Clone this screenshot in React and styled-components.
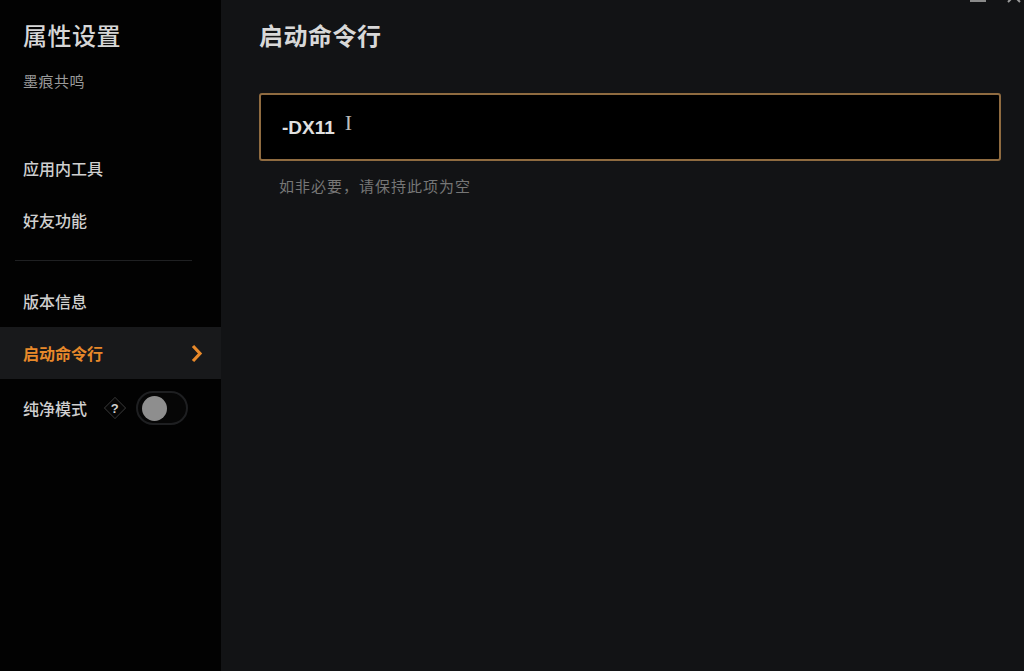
import React from "react";
import styled, { createGlobalStyle } from "styled-components";

const Global = createGlobalStyle`
  html, body { margin: 0; padding: 0; background: #121315; }
  body { font-family: "Noto Sans CJK SC", "Noto Sans", "Liberation Sans", sans-serif; }
  * { box-sizing: border-box; }
`;

const Frame = styled.div`
  position: relative;
  display: flex;
  width: 1024px;
  height: 671px;
  overflow: hidden;
  background: #121315;
`;

const Sidebar = styled.aside`
  width: 221px;
  flex: none;
  background: #020202;
  display: flex;
  flex-direction: column;
  padding-top: 18px;
`;

const SideTitle = styled.h1`
  margin: 0 0 0 23px;
  font-size: 24px;
  font-weight: 500;
  color: #d6d6d6;
  line-height: 34px;
  letter-spacing: 0.5px;
`;

const SideSub = styled.div`
  margin: 19px 0 0 23px;
  font-size: 15px;
  color: #9a9a9a;
  line-height: 20px;
  letter-spacing: 0.5px;
`;

const Spacer = styled.div`
  height: 51px;
`;

const NavItem = styled.div`
  display: flex;
  align-items: center;
  height: ${(p) => p.$h || 52}px;
  padding: 0 18px 0 23px;
  font-size: 16px;
  font-weight: ${(p) => (p.$active ? 700 : 500)};
  color: ${(p) => (p.$active ? "#e8892a" : "#cfcfcf")};
  background: ${(p) => (p.$active ? "#18191b" : "transparent")};
  gap: 6px;
`;

const NavText = styled.span`
  flex: 1;
`;

const Divider = styled.div`
  height: 1px;
  margin: 14px 29px 14px 15px;
  background: #1f2022;
`;

const Help = styled.span`
  width: 16px;
  height: 16px;
  display: inline-flex;
  align-items: center;
  justify-content: center;
  transform: rotate(45deg);
  border: 1.5px solid #2c2c2c;
  background: #050505;
  margin: 0 7px 0 14px;
  & > span {
    transform: rotate(-45deg);
    font-size: 13px;
    font-weight: 700;
    color: #cfcfcf;
    font-family: "Liberation Sans", sans-serif;
  }
`;

const Toggle = styled.span`
  width: 52px;
  height: 34px;
  border-radius: 17px;
  border: 2px solid #1e1f21;
  background: #060606;
  display: inline-flex;
  align-items: center;
  padding-left: 4px;
  &::before {
    content: "";
    width: 25px;
    height: 25px;
    border-radius: 50%;
    background: #8e8e8e;
  }
`;

const Main = styled.main`
  flex: 1;
  padding: 18px 23px 0 38px;
  display: flex;
  flex-direction: column;
`;

const Title = styled.h2`
  margin: 0;
  font-size: 24px;
  font-weight: 700;
  color: #d8d8d8;
  line-height: 34px;
  letter-spacing: 0.5px;
`;

const InputBox = styled.div`
  margin-top: 41px;
  height: 68px;
  border: 2px solid #8f6b40;
  border-radius: 3px;
  background: #000;
  display: flex;
  align-items: center;
  padding: 0 21px;
  gap: 10px;
`;

const InputText = styled.span`
  font-family: "Liberation Sans", Arial, sans-serif;
  font-size: 19px;
  font-weight: 700;
  color: #e0e0e0;
  margin-top: 2px;
`;

const Caret = styled.span`
  font-family: "Liberation Serif", serif;
  font-size: 22px;
  color: #bdbdbd;
  margin-top: -8px;
`;

const Hint = styled.div`
  margin: 14px 0 0 20px;
  font-size: 15px;
  color: #767676;
  letter-spacing: 1px;
`;

const WinControls = styled.div`
  position: absolute;
  top: -12px;
  right: 2px;
  display: flex;
  align-items: flex-start;
  gap: 20px;
`;

const MinLine = styled.span`
  width: 16px;
  height: 2px;
  background: #8a8a8a;
  margin-top: 12px;
`;

const Chevron = () => (
  <svg width="13" height="19" viewBox="0 0 13 19">
    <path d="M3 2 L10 9.5 L3 17" fill="none" stroke="#e8892a" strokeWidth="3.2" strokeLinejoin="miter" />
  </svg>
);

export default function App() {
  return (
    <>
      <Global />
      <Frame>
        <Sidebar>
          <SideTitle>属性设置</SideTitle>
          <SideSub>墨痕共鸣</SideSub>
          <Spacer />
          <NavItem>
            <NavText>应用内工具</NavText>
          </NavItem>
          <NavItem>
            <NavText>好友功能</NavText>
          </NavItem>
          <Divider />
          <NavItem>
            <NavText>版本信息</NavText>
          </NavItem>
          <NavItem $active>
            <NavText>启动命令行</NavText>
            <Chevron />
          </NavItem>
          <NavItem $h={58}>
            <span>纯净模式</span>
            <Help>
              <span>?</span>
            </Help>
            <Toggle />
          </NavItem>
        </Sidebar>
        <Main>
          <Title>启动命令行</Title>
          <InputBox>
            <InputText>-DX11</InputText>
            <Caret>I</Caret>
          </InputBox>
          <Hint>如非必要，请保持此项为空</Hint>
        </Main>
        <WinControls>
          <MinLine />
          <svg width="16" height="16" viewBox="0 0 16 16">
            <path d="M2 2 L14 14 M14 2 L2 14" stroke="#9a9a9a" strokeWidth="2" />
          </svg>
        </WinControls>
      </Frame>
    </>
  );
}
